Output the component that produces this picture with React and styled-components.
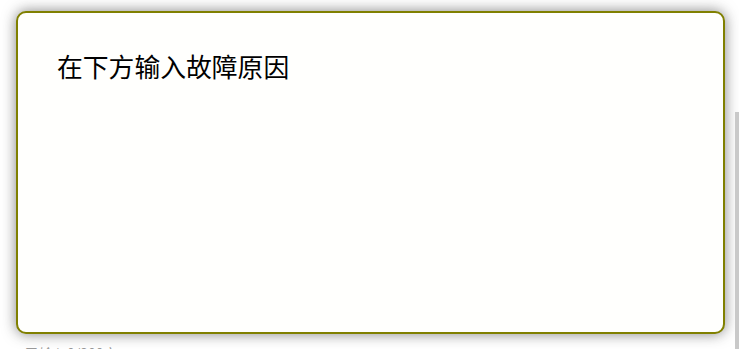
import React, {useState} from 'react'
import styled, {createGlobalStyle} from 'styled-components'

const GlobalStyle = createGlobalStyle`
body {
  margin: 0;
  background: #ffffff;
  font-family: "Noto Sans CJK SC", "Noto Sans", sans-serif;
  overflow: hidden;
}
`

const Page = styled.div`
padding: 11px 14px 0 16px;
`

const Reason = styled.textarea`
display: block;
box-sizing: border-box;
width: 709px;
height: 323px;
margin: 0;
padding: 38px 39px;
border: 2px solid #808000;
border-radius: 10px;
background: #fffffd;
box-shadow: 0 0 14px rgba(50, 50, 50, 0.6);
resize: none;
outline: none;
font-family: "Noto Sans CJK SC", "Noto Sans", sans-serif;
font-size: 25.8px;
line-height: 1.2;
color: #000;

&::placeholder {
  color: #000;
}
`

const Hint = styled.div`
margin: 9px 0 0 9px;
font-size: 14px;
color: #999;
`

const Scroll = styled.div`
position: fixed;
right: 0;
top: 112px;
bottom: 0;
width: 4px;
background: #c9c9c9;
`

const App = () => {
  const [reason, setReason] = useState('')

  return (
    <>
      <GlobalStyle />
      <Page>
        <Reason
          placeholder="在下方输入故障原因"
          value={reason}
          onChange={e => setReason(e.target.value)}
        />
        <Hint>已输入{reason.length}/200字</Hint>
      </Page>
      <Scroll />
    </>
  )
}

export default App
